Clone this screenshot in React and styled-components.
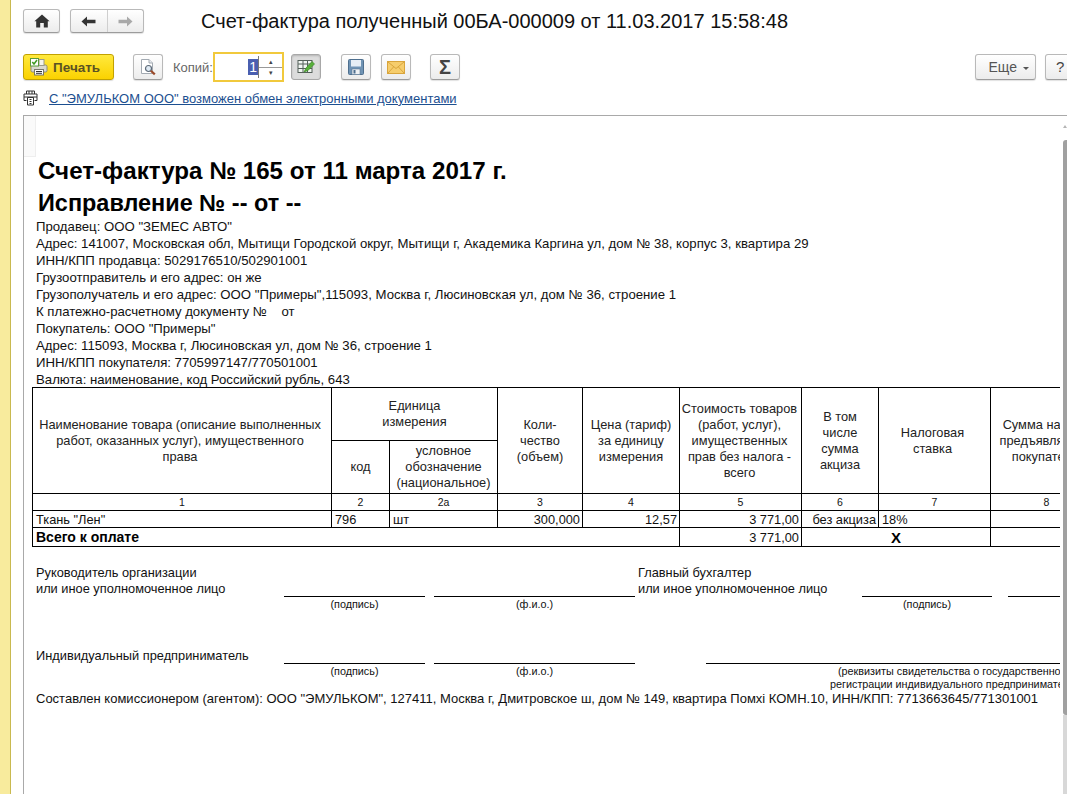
import React from "react";
import styled, { createGlobalStyle, css } from "styled-components";

const GlobalStyle = createGlobalStyle`
    html, body {
        margin: 0;
        padding: 0;
        background: #fff;
        overflow: hidden;
    }
    * {
        box-sizing: border-box;
    }
`;

const columns = [299, 58, 108, 85, 97, 122, 77, 112, 112];

const HomeIcon = () => (
    <svg width="16" height="14" viewBox="0 0 16 14">
        <path d="M8 0.5 L15.6 7.2 L13.8 7.2 L13.8 13.5 L9.8 13.5 L9.8 9 L6.2 9 L6.2 13.5 L2.2 13.5 L2.2 7.2 L0.4 7.2 Z" fill="#333" />
    </svg>
);

const ArrowIcon = ({ color, flip }) => (
    <svg width="15" height="11" viewBox="0 0 15 11" style={flip ? { transform: "scaleX(-1)" } : undefined}>
        <path d="M0.5 5.5 L6 0.5 L6 3.8 L14.5 3.8 L14.5 7.2 L6 7.2 L6 10.5 Z" fill={color} />
    </svg>
);

const PrinterIcon = () => (
    <svg width="18" height="18" viewBox="0 0 18 18">
        <rect x="1" y="7" width="16" height="7" rx="1.5" fill="#d9d9cf" stroke="#8b8b7a" />
        <rect x="4.5" y="11.5" width="9" height="5.5" fill="#fff" stroke="#77776a" />
        <path d="M6 13.5h6M6 15.3h6" stroke="#333" />
        <rect x="9" y="1.5" width="5" height="6" fill="#f4f4ec" stroke="#9a9a8c" />
        <rect x="0.5" y="0.5" width="8" height="7.5" fill="#fff" stroke="#5a9a3a" />
        <path d="M2.3 4 L4 6 L7 2" fill="none" stroke="#3e9a22" strokeWidth="1.5" />
    </svg>
);

const PreviewIcon = () => (
    <svg width="18" height="18" viewBox="0 0 18 18">
        <path d="M2.5 1.5 H10 L13.5 5 V15.5 H2.5 Z" fill="#fff" stroke="#a3aab2" />
        <path d="M10 1.5 V5 H13.5" fill="#e8ecf0" stroke="#a3aab2" />
        <circle cx="9.5" cy="10.5" r="3" fill="#dfeaf4" stroke="#5d6a78" strokeWidth="1.2" />
        <path d="M11.8 12.8 L15.8 16.4" stroke="#9a4a2a" strokeWidth="2.2" />
    </svg>
);

const TableEditIcon = () => (
    <svg width="18" height="16" viewBox="0 0 18 16">
        <rect x="1" y="1.5" width="14" height="12" fill="#f2f6f2" stroke="#55605a" />
        <path d="M1 5h14M1 9.5h14M6 1.5v12M10.5 1.5v12" stroke="#55605a" />
        <path d="M7 13 L9 9 L15 2.5 L17.5 5 L11 11.5 Z" fill="#58b03a" stroke="#3d8a28" strokeWidth="0.7" />
    </svg>
);

const SaveIcon = () => (
    <svg width="16" height="16" viewBox="0 0 16 16">
        <rect x="0.5" y="0.5" width="15" height="15" rx="1" fill="#6f93b4" stroke="#4e6f8e" />
        <rect x="3" y="1" width="10" height="6.5" fill="#e6eef5" />
        <rect x="4" y="10" width="8" height="5.5" fill="#eef1f4" stroke="#5a7894" strokeWidth="0.6" />
        <rect x="5.5" y="11" width="2" height="3.5" fill="#4e6f8e" />
    </svg>
);

const MailIcon = () => (
    <svg width="18" height="13" viewBox="0 0 18 13">
        <rect x="0.5" y="0.5" width="17" height="12" fill="#f6cd6c" stroke="#d9a53c" />
        <path d="M1 1 L9 7.5 L17 1 M1 12 L6.5 6 M17 12 L11.5 6" fill="none" stroke="#d9a53c" />
    </svg>
);

const LinkIcon = () => (
    <svg width="15" height="16" viewBox="0 0 15 16">
        <path d="M3.5 4 V1 H11.5 V4 M3.5 10.5 H1 V4 H14 V10.5 H11.5 M4.5 7.5 H10.5 V15 H4.5 Z M1 7H14M6.5 9.5h2M6.5 11.5h2M6.5 13.5h2M6 1V4M9 1V4" fill="none" stroke="#333" />
    </svg>
);

function App() {
    return (
        <>
            <GlobalStyle />
            <Page>
                <SideStrip />
                <Main>
                    <Header>
                        <ToolButton $width={37} $height={24}>
                            <HomeIcon />
                        </ToolButton>
                        <NavGroup>
                            <NavPart>
                                <ArrowIcon color="#333" />
                            </NavPart>
                            <NavPart>
                                <ArrowIcon color="#a9a9a9" flip />
                            </NavPart>
                        </NavGroup>
                        <Title>Счет-фактура полученный 00БА-000009 от 11.03.2017 15:58:48</Title>
                    </Header>

                    <Toolbar>
                        <PrintButton>
                            <PrinterIcon />
                            Печать
                        </PrintButton>
                        <ToolButton $left={19}>
                            <PreviewIcon />
                        </ToolButton>
                        <CopiesLabel>Копий:</CopiesLabel>
                        <CopiesField>
                            <CopiesValue>
                                <Selected>1</Selected>
                            </CopiesValue>
                            <Spin>
                                <SpinHalf>▴</SpinHalf>
                                <SpinHalf $down>▾</SpinHalf>
                            </Spin>
                        </CopiesField>
                        <ToolButton $left={7} $pressed>
                            <TableEditIcon />
                        </ToolButton>
                        <ToolButton $left={20}>
                            <SaveIcon />
                        </ToolButton>
                        <ToolButton $left={10}>
                            <MailIcon />
                        </ToolButton>
                        <ToolButton $left={19}>
                            <SigmaMark>Σ</SigmaMark>
                        </ToolButton>
                        <MoreButton>
                            Еще <Caret />
                        </MoreButton>
                        <HelpButton>?</HelpButton>
                    </Toolbar>

                    <LinkRow>
                        <LinkIcon />
                        <EdoLink href="#">С "ЭМУЛЬКОМ ООО" возможен обмен электронными документами</EdoLink>
                    </LinkRow>

                    <DocFrame>
                        <DocSheet>
                            <CornerCell />
                            <DocBody>
                                <DocTitle $size={24.15}>Счет-фактура № 165 от 11 марта 2017 г.</DocTitle>
                                <DocTitle $size={23.45}>Исправление № -- от --</DocTitle>
                                <InfoLines>
                                    <div>Продавец: ООО "ЗЕМЕС АВТО"</div>
                                    <div>Адрес: 141007, Московская обл, Мытищи Городской округ, Мытищи г, Академика Каргина ул, дом № 38, корпус 3, квартира 29</div>
                                    <div>ИНН/КПП продавца: 5029176510/502901001</div>
                                    <div>Грузоотправитель и его адрес: он же</div>
                                    <div>Грузополучатель и его адрес: ООО "Примеры",115093, Москва г, Люсиновская ул, дом № 36, строение 1</div>
                                    <div>К платежно-расчетному документу №&nbsp;&nbsp;&nbsp; от</div>
                                    <div>Покупатель: ООО "Примеры"</div>
                                    <div>Адрес: 115093, Москва г, Люсиновская ул, дом № 36, строение 1</div>
                                    <div>ИНН/КПП покупателя: 7705997147/770501001</div>
                                    <div>Валюта: наименование, код Российский рубль, 643</div>
                                </InfoLines>

                                <Invoice>
                                    <colgroup>
                                        {columns.map((w, i) => (
                                            <col key={i} style={{ width: w }} />
                                        ))}
                                    </colgroup>
                                    <tbody>
                                        <HeadRow $height={53}>
                                            <HeadCell rowSpan={2} $inset={4}>
                                                Наименование товара (описание выполненных<br />
                                                работ, оказанных услуг), имущественного<br />
                                                права
                                            </HeadCell>
                                            <HeadCell colSpan={2}>Единица<br />измерения</HeadCell>
                                            <HeadCell rowSpan={2}>Коли-<br />чество<br />(объем)</HeadCell>
                                            <HeadCell rowSpan={2}>Цена (тариф)<br />за единицу<br />измерения</HeadCell>
                                            <HeadCell rowSpan={2} $inset={2}>
                                                Стоимость товаров<br />(работ, услуг),<br />имущественных<br />прав без налога -<br />всего
                                            </HeadCell>
                                            <HeadCell rowSpan={2}>В том<br />числе<br />сумма<br />акциза</HeadCell>
                                            <HeadCell rowSpan={2} $inset={4}>Налоговая<br />ставка</HeadCell>
                                            <HeadCell rowSpan={2}>Сумма налога,<br />предъявляемая<br />покупателю</HeadCell>
                                        </HeadRow>
                                        <HeadRow $height={53}>
                                            <HeadCell>код</HeadCell>
                                            <HeadCell>условное<br />обозначение<br />(национальное)</HeadCell>
                                        </HeadRow>
                                        <NumberRow>
                                            {["1", "2", "2а", "3", "4", "5", "6", "7", "8"].map((n) => (
                                                <NumberCell key={n}>{n}</NumberCell>
                                            ))}
                                        </NumberRow>
                                        <DataRow>
                                            <DataCell>Ткань "Лен"</DataCell>
                                            <DataCell>796</DataCell>
                                            <DataCell>шт</DataCell>
                                            <DataCell $align="right">300,000</DataCell>
                                            <DataCell $align="right">12,57</DataCell>
                                            <DataCell $align="right">3 771,00</DataCell>
                                            <DataCell $align="right">без акциза</DataCell>
                                            <DataCell>18%</DataCell>
                                            <DataCell />
                                        </DataRow>
                                        <TotalRow>
                                            <TotalCell colSpan={5}>Всего к оплате</TotalCell>
                                            <DataCell $align="right">3 771,00</DataCell>
                                            <TotalCell colSpan={2} $center>X</TotalCell>
                                            <DataCell />
                                        </TotalRow>
                                    </tbody>
                                </Invoice>

                                <SignRow $top={18} $height={32}>
                                    <SignText $width={248}>Руководитель организации<br />или иное уполномоченное лицо</SignText>
                                    <SignLine $width={141} />
                                    <SignLine $width={201} $left={9} />
                                    <SignText $width={224} $left={3}>Главный бухгалтер<br />или иное уполномоченное лицо</SignText>
                                    <SignLine $width={130} />
                                    <SignLine $width={60} $left={16} />
                                </SignRow>
                                <CaptionRow>
                                    <Caption $width={141} $left={248}>(подпись)</Caption>
                                    <Caption $width={201} $left={9}>(ф.и.о.)</Caption>
                                    <Caption $width={130} $left={227}>(подпись)</Caption>
                                </CaptionRow>

                                <SignRow $top={38} $height={16}>
                                    <SignText $width={248}>Индивидуальный предприниматель</SignText>
                                    <SignLine $width={141} />
                                    <SignLine $width={201} $left={9} />
                                    <SignLine $width={354} $left={71} />
                                </SignRow>
                                <CaptionRow>
                                    <Caption $width={141} $left={248}>(подпись)</Caption>
                                    <Caption $width={201} $left={9}>(ф.и.о.)</Caption>
                                    <Caption $width={354} $left={71} $indent={132}>(реквизиты свидетельства о государственной</Caption>
                                </CaptionRow>
                                <CaptionRow>
                                    <Caption $width={354} $left={670} $indent={124}>регистрации индивидуального предпринимателя)</Caption>
                                </CaptionRow>
                                <Footer>Составлен комиссионером (агентом): ООО "ЭМУЛЬКОМ", 127411, Москва г, Дмитровское ш, дом № 149, квартира Помxi КОМН.10, ИНН/КПП: 7713663645/771301001</Footer>
                            </DocBody>
                        </DocSheet>
                        <Scrollbar>
                            <ScrollArrow />
                            <ScrollThumb />
                            <ScrollTrack />
                        </Scrollbar>
                    </DocFrame>
                </Main>
            </Page>
        </>
    );
}

const Page = styled.div`
    display: flex;
    width: 1067px;
    height: 794px;
    overflow: hidden;
    font-family: "Liberation Sans", Arial, sans-serif;
    color: #1a1a1a;
`;

const SideStrip = styled.div`
    flex: 0 0 11px;
    background: #f8eb9d;
    border-right: 1px solid #c9b94f;
`;

const Main = styled.div`
    flex: 1;
    min-width: 0;
    display: flex;
    flex-direction: column;
    padding-left: 12px;
`;

const Header = styled.div`
    display: flex;
    align-items: center;
    height: 24px;
    margin-top: 9px;
`;

const raised = css`
    border: 1px solid #b9b9b9;
    border-bottom-color: #9c9c9c;
    border-radius: 3px;
    background: linear-gradient(#ffffff, #ececec);
    box-shadow: 0 1px 1px rgba(0, 0, 0, 0.12);
`;

const ToolButton = styled.div`
    ${raised}
    flex: none;
    display: flex;
    align-items: center;
    justify-content: center;
    width: ${(p) => p.$width || 30}px;
    height: ${(p) => p.$height || 26}px;
    margin-left: ${(p) => p.$left || 0}px;
    ${(p) =>
        p.$pressed &&
        css`
            background: #dcdcdc;
            border-color: #a8a8a8;
            box-shadow: inset 0 1px 2px rgba(0, 0, 0, 0.18);
        `}
`;

const NavGroup = styled.div`
    ${raised}
    display: flex;
    width: 74px;
    height: 24px;
    margin-left: 10px;
`;

const NavPart = styled.div`
    flex: 1;
    display: flex;
    align-items: center;
    justify-content: center;
    & + & {
        border-left: 1px solid #cfcfcf;
    }
`;

const Title = styled.div`
    margin-left: 57px;
    font-size: 20px;
    color: #111;
    white-space: nowrap;
`;

const Toolbar = styled.div`
    display: flex;
    align-items: center;
    height: 30px;
    margin-top: 19px;
`;

const PrintButton = styled.div`
    flex: none;
    display: flex;
    align-items: center;
    gap: 5px;
    width: 91px;
    height: 26px;
    padding-left: 6px;
    border: 1px solid #c2a100;
    border-radius: 3px;
    background: linear-gradient(#ffe93d, #fbd200);
    box-shadow: 0 1px 1px rgba(0, 0, 0, 0.15);
    font-size: 13.5px;
    font-weight: 700;
    color: #5a5224;
`;

const CopiesLabel = styled.div`
    margin-left: 10px;
    width: 40px;
    font-size: 13px;
    color: #666;
    white-space: nowrap;
`;

const CopiesField = styled.div`
    flex: none;
    display: flex;
    width: 71px;
    height: 30px;
    border: 2px solid #f1c93c;
    background: #fff;
`;

const CopiesValue = styled.div`
    flex: 1;
    display: flex;
    align-items: center;
    justify-content: flex-end;
    font-size: 14px;
`;

const Selected = styled.span`
    background: #4a5fb0;
    color: #fff;
    padding: 0 1px;
    line-height: 16px;
`;

const Spin = styled.div`
    flex: 0 0 24px;
    display: flex;
    flex-direction: column;
    margin: 2px 0;
    border-left: 1px solid #777;
`;

const SpinHalf = styled.div`
    flex: 1;
    display: flex;
    align-items: center;
    justify-content: center;
    font-size: 7px;
    line-height: 1;
    color: #444;
    ${(p) => p.$down && "border-top: 1px solid #999;"}
`;

const SigmaMark = styled.span`
    font-size: 20px;
    font-weight: 700;
    color: #444;
    line-height: 1;
`;

const MoreButton = styled.div`
    ${raised}
    flex: none;
    display: flex;
    align-items: center;
    justify-content: flex-end;
    gap: 6px;
    width: 61px;
    height: 26px;
    margin-left: auto;
    padding-right: 6px;
    font-size: 14px;
    color: #555;
`;

const Caret = styled.span`
    width: 0;
    height: 0;
    margin-top: 2px;
    border-left: 3px solid transparent;
    border-right: 3px solid transparent;
    border-top: 3px solid #555;
`;

const HelpButton = styled.div`
    ${raised}
    flex: none;
    width: 30px;
    height: 26px;
    margin-left: 9px;
    margin-right: -8px;
    padding-left: 10px;
    font-size: 15px;
    line-height: 24px;
    color: #444;
`;

const LinkRow = styled.div`
    display: flex;
    align-items: center;
    gap: 11px;
    height: 16px;
    margin-top: 8px;
`;

const EdoLink = styled.a`
    font-size: 13px;
    line-height: 15px;
    color: #1c4f90;
    text-decoration: underline;
    white-space: nowrap;
`;

const DocFrame = styled.div`
    flex: 1;
    min-height: 0;
    display: flex;
    margin-top: 9px;
    border-top: 1px solid #a9a9a9;
    border-left: 1px solid #a9a9a9;
`;

const DocSheet = styled.div`
    position: relative;
    flex: 1;
    min-width: 0;
    overflow: hidden;
`;

const CornerCell = styled.div`
    position: absolute;
    top: 0;
    left: 0;
    width: 12px;
    height: 41px;
    border-right: 1px solid #eeeeee;
    border-bottom: 1px solid #eeeeee;
    background: #fafafa;
`;

const DocBody = styled.div`
    padding: 39px 0 0 8px;
    width: 1200px;
    font-size: 12.8px;
    color: #111;
`;

const DocTitle = styled.div`
    margin-left: 6px;
    font-size: ${(p) => p.$size}px;
    font-weight: 700;
    line-height: 32px;
    height: 32px;
    color: #000;
    white-space: nowrap;
`;

const InfoLines = styled.div`
    margin: -1px 0 0 4px;
    font-size: 13.2px;
    line-height: 17px;
    white-space: nowrap;
`;

const Invoice = styled.table`
    table-layout: fixed;
    border-collapse: collapse;
    width: 1070px;
    margin-top: -1px;
    border-top: 1px solid #000;
    font-size: 12.8px;
`;

const HeadRow = styled.tr`
    height: ${(p) => p.$height}px;
`;

const HeadCell = styled.td`
    border: 1px solid #000;
    padding: 0 ${(p) => p.$inset || 0}px 0 0;
    text-align: center;
    vertical-align: middle;
    line-height: 16px;
    color: #222;
    white-space: nowrap;
    overflow: hidden;
`;

const NumberRow = styled.tr`
    height: 17px;
`;

const NumberCell = styled.td`
    border: 1px solid #000;
    padding: 0;
    text-align: center;
    font-size: 10.5px;
    line-height: 14px;
`;

const DataRow = styled.tr`
    height: 17px;
`;

const DataCell = styled.td`
    border: 1px solid #000;
    padding: 0 2px 0 3px;
    text-align: ${(p) => p.$align || "left"};
    line-height: 15px;
    white-space: nowrap;
`;

const TotalRow = styled.tr`
    height: 19px;
`;

const TotalCell = styled.td`
    border: 1px solid #000;
    padding: 0 3px;
    font-weight: 700;
    font-size: ${(p) => (p.$center ? "15px" : "14px")};
    text-align: ${(p) => (p.$center ? "center" : "left")};
    line-height: 15px;
    color: #000;
`;

const SignRow = styled.div`
    display: flex;
    align-items: stretch;
    height: ${(p) => p.$height}px;
    margin-top: ${(p) => p.$top}px;
    padding-left: 4px;
    white-space: nowrap;
`;

const SignText = styled.div`
    flex: none;
    width: ${(p) => p.$width}px;
    margin-left: ${(p) => p.$left || 0}px;
    line-height: 16px;
`;

const SignLine = styled.div`
    flex: none;
    width: ${(p) => p.$width}px;
    margin-left: ${(p) => p.$left || 0}px;
    border-bottom: 1px solid #000;
`;

const CaptionRow = styled.div`
    display: flex;
    height: 13px;
    padding-left: 4px;
    white-space: nowrap;
`;

const Caption = styled.div`
    flex: none;
    width: ${(p) => p.$width}px;
    margin-top: 1px;
    margin-left: ${(p) => p.$left}px;
    padding-left: ${(p) => p.$indent || 0}px;
    font-size: 10.8px;
    line-height: 13px;
    text-align: ${(p) => (p.$indent ? "left" : "center")};
`;

const Footer = styled.div`
    margin: 1px 0 0 4px;
    font-size: 13px;
    line-height: 16px;
    white-space: nowrap;
`;

const Scrollbar = styled.div`
    flex: 0 0 7px;
    display: flex;
    flex-direction: column;
    align-items: flex-end;
`;

const ScrollArrow = styled.div`
    width: 0;
    height: 0;
    margin: 9px 0 0;
    border-left: 2px solid transparent;
    border-right: 2px solid transparent;
    border-bottom: 3px solid #b5b5b5;
`;

const ScrollThumb = styled.div`
    width: 4px;
    height: 575px;
    margin-top: 12px;
    border-radius: 3px 0 0 3px;
    background: #a0a0a0;
`;

const ScrollTrack = styled.div`
    flex: 1;
    width: 4px;
    background: #d8d8d8;
`;

export default App;
